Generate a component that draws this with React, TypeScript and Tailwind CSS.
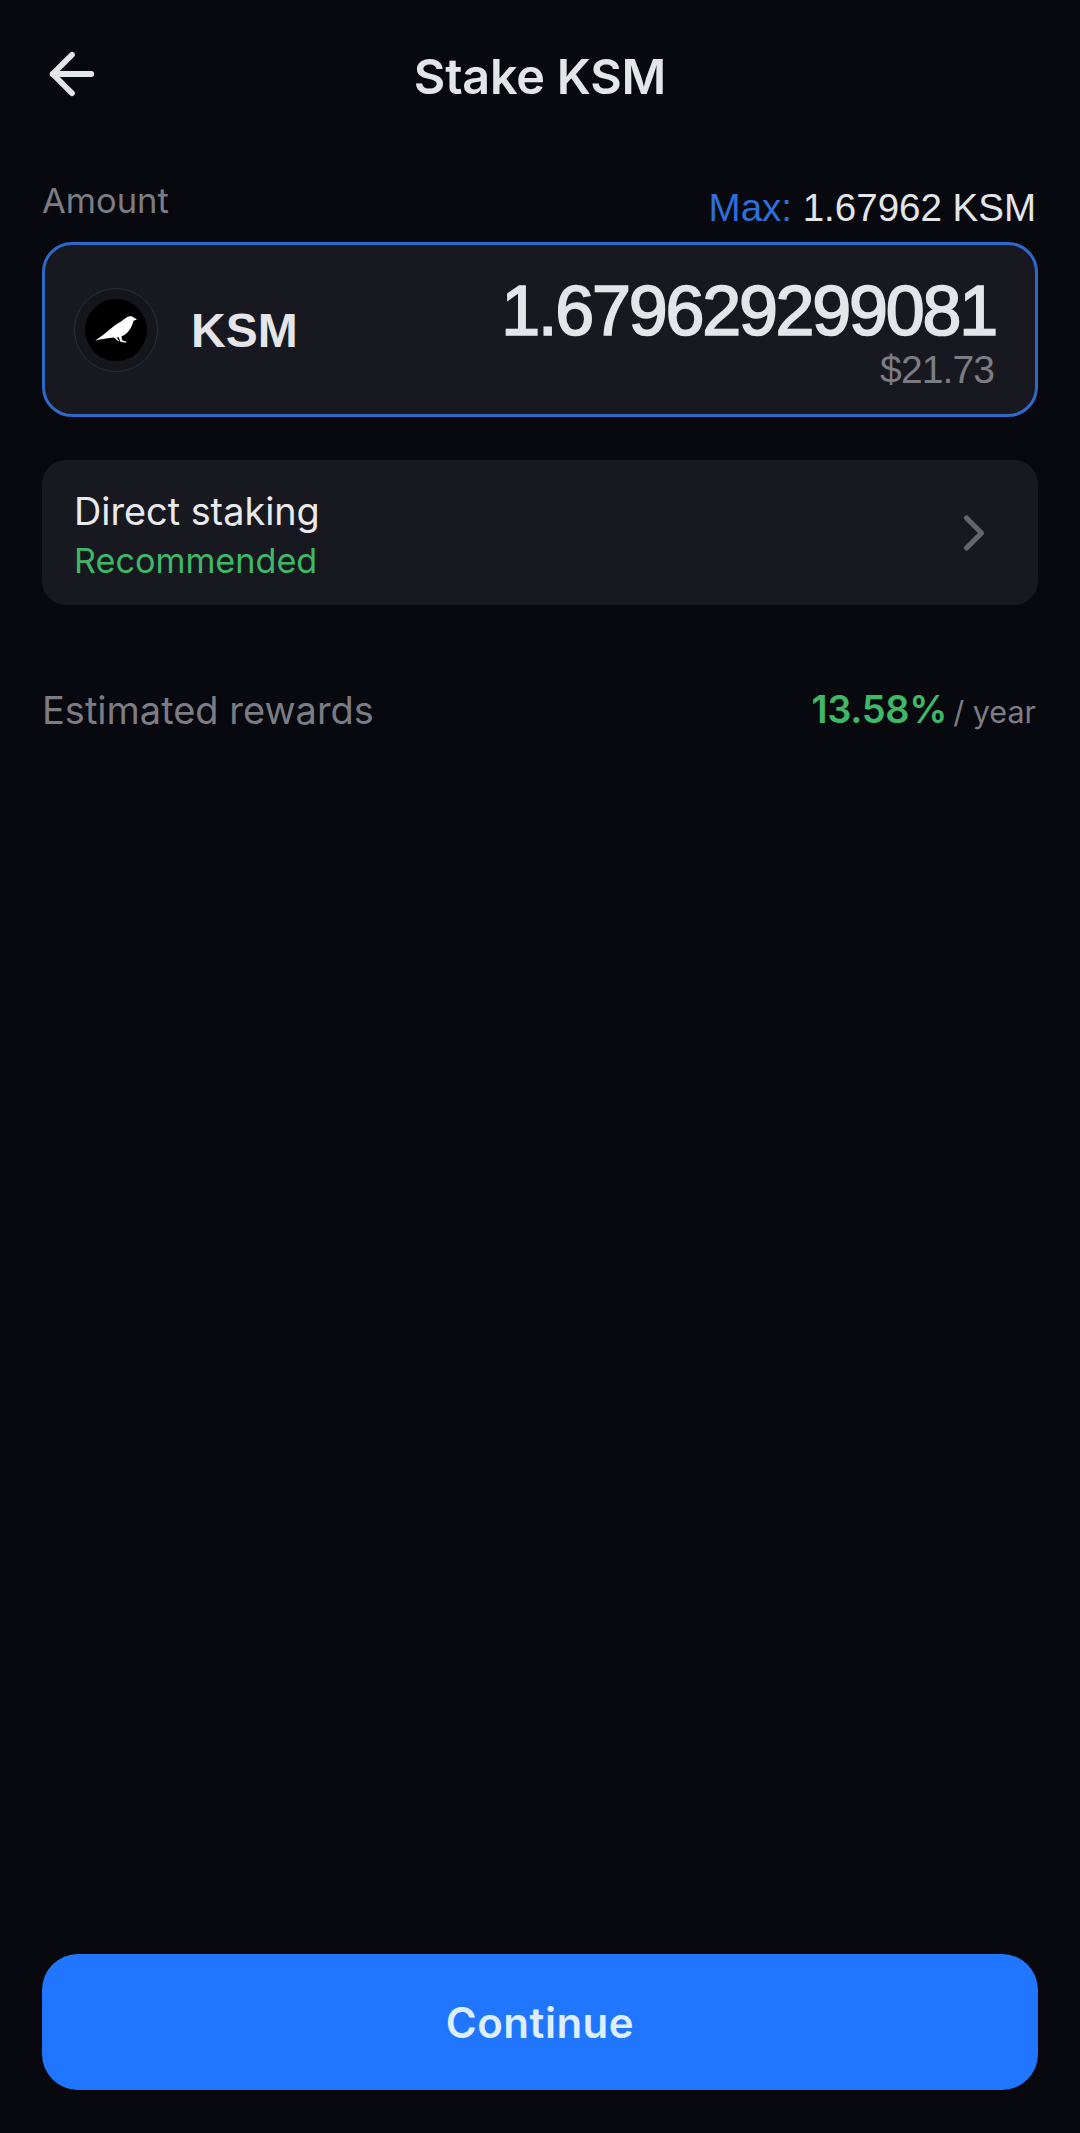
import { ArrowLeft, ChevronRight } from 'lucide-react';

function KusamaLogo() {
  return (
    <div className="flex h-[84px] w-[84px] shrink-0 items-center justify-center rounded-full border border-[#2c2d35] bg-[#15161c]">
      <div className="flex h-[62px] w-[62px] items-center justify-center rounded-full bg-black">
        <svg viewBox="0 0 124 80" className="h-[27px] w-[42px]">
          <path
            fill="#fff"
            d="M0 73 C10 66 24 57 36 46 C48 36 62 24 76 17 C86 11 92 3 102 1 C110 -1 114 4 118 7 L124 10 L114 14 C112 22 108 34 100 44 C94 52 86 58 78 61 L80 72 L93 76 L92 79 L75 76 L70 63 L64 64 L72 75 L69 75 L56 64 C38 65 18 69 0 73 Z"
          />
        </svg>
      </div>
    </div>
  );
}

export default function App() {
  return (
    <div className="flex h-[2133px] w-[1080px] flex-col bg-[#07090f] px-[42px] pb-[43px] font-['Inter',sans-serif]">
      <header className="relative flex h-[154px] items-center justify-center">
        <ArrowLeft className="absolute left-[-3px] top-[41px] h-[66px] w-[66px] text-[#e4e5e8]" strokeWidth={2.1} />
        <h1 className="text-[48.5px] font-semibold leading-none tracking-[-0.2px] text-[#e4e5e8]">Stake KSM</h1>
      </header>

      <div className="mt-[25px] flex h-[63px] items-start justify-between">
        <span className="text-[34.5px] leading-[44px] text-[#7c7d84]">Amount</span>
        <span className="mr-[2px] mt-[7px] font-['Liberation_Sans',sans-serif] text-[38.5px] leading-[44px] text-[#e4e5e8]">
          <span className="text-[#2f6fdc]">Max:</span> 1.67962 KSM
        </span>
      </div>

      <div className="flex h-[175px] items-center justify-between rounded-[30px] border-[3px] border-[#2f68c8] bg-[#181920] pl-[29px] pr-[39px]">
        <div className="flex items-center gap-[33px]">
          <KusamaLogo />
          <span className="mt-[2px] font-['Liberation_Sans',sans-serif] text-[48px] font-bold text-[#e4e5e8]">KSM</span>
        </div>
        <div className="mt-[6px] flex flex-col items-end">
          <span className="font-['Liberation_Sans',sans-serif] text-[70px] font-normal leading-[74px] tracking-[-2.2px] text-[#e4e5e8] [-webkit-text-stroke:1.7px_#e4e5e8]">
            1.679629299081
          </span>
          <span className="mr-[2px] font-['Liberation_Sans',sans-serif] text-[39px] leading-[44px] tracking-[-0.9px] text-[#7c7d84]">$21.73</span>
        </div>
      </div>

      <div className="mt-[43px] flex h-[145px] items-center justify-between rounded-[24px] bg-[#181920] pl-[32px] pr-[34px]">
        <div className="mt-[6px] flex flex-col">
          <span className="text-[37.8px] leading-[50px] text-[#e9eaec]">Direct staking</span>
          <span className="text-[34.2px] leading-[50px] text-[#3eb866]">Recommended</span>
        </div>
        <ChevronRight className="h-[60px] w-[60px] text-[#64656c]" strokeWidth={2.1} />
      </div>

      <div className="mt-[79px] flex items-center justify-between">
        <span className="text-[38px] leading-[48px] text-[#7c7d84]">Estimated rewards</span>
        <span className="mr-[2px] mt-[1px] flex items-baseline gap-[6px]">
          <span className="text-[38px] font-semibold leading-[48px] tracking-[-0.3px] text-[#3eb866]">13.58%</span>
          <span className="text-[30.5px] leading-[48px] text-[#7c7d84]">/ year</span>
        </span>
      </div>

      <button className="mt-auto flex h-[136px] items-center justify-center rounded-[36px] bg-[#2176ff] text-[42px] font-semibold tracking-[0.5px] text-[#dceeff]">
        Continue
      </button>
    </div>
  );
}
